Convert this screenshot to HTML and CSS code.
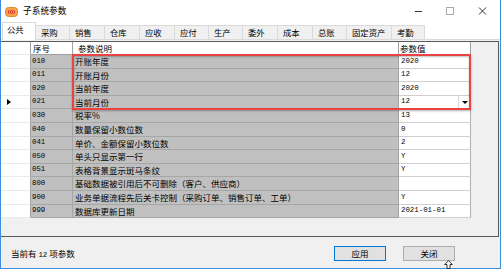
FILE: index.html
```html
<!DOCTYPE html>
<html>
<head>
<meta charset="utf-8">
<link rel="stylesheet" href="styles.css">
</head>
<body>
<div class="win">
  <div class="titlebar">
    <svg class="appicon" width="13" height="10" viewBox="0 0 13 10">
      <rect x="0.5" y="0.5" width="12" height="9" rx="3" fill="#f4a24c" stroke="#e08a30" stroke-width="1"/>
      <rect x="3" y="3.5" width="7" height="3" rx="1" fill="#d8322c"/>
      <rect x="4" y="4.5" width="1" height="1" fill="#ffd"/>
      <rect x="6" y="4.5" width="1" height="1" fill="#ffd"/>
      <rect x="8" y="4.5" width="1" height="1" fill="#ffd"/>
    </svg>
    <span class="title">子系统参数</span>
    <div class="controls">
      <svg class="ctl" width="32" height="20" viewBox="0 0 32 20"><line x1="12" y1="10.5" x2="19" y2="10.5" stroke="#333" stroke-width="1"/></svg>
      <svg class="ctl" width="32" height="20" viewBox="0 0 32 20"><rect x="11.5" y="6.5" width="7" height="7" fill="none" stroke="#aaa" stroke-width="1"/></svg>
      <svg class="ctl" width="32" height="20" viewBox="0 0 32 20"><path d="M12 6.5 L19 13.5 M19 6.5 L12 13.5" stroke="#333" stroke-width="1"/></svg>
    </div>
  </div>
  <div class="tabs">
    <div class="tab sel w34">公共</div>
    <div class="tab w34">采购</div>
    <div class="tab w35">销售</div>
    <div class="tab w35">仓库</div>
    <div class="tab w35">应收</div>
    <div class="tab w34">应付</div>
    <div class="tab w34">生产</div>
    <div class="tab w35">委外</div>
    <div class="tab w35">成本</div>
    <div class="tab w34">总账</div>
    <div class="tab w45">固定资产</div>
    <div class="tab w33">考勤</div>
  </div>
  <div class="gridbox">
    <div class="grid">
      <div class="c rh hd"></div><div class="c hd">序号</div><div class="c hd pl5">参数说明</div><div class="c hd vl">参数值</div>

      <div class="c rh"></div><div class="c g num">010</div><div class="c g">开账年度</div><div class="c v num">2020</div>
      <div class="c rh"></div><div class="c g num">011</div><div class="c g">开账月份</div><div class="c v num">12</div>
      <div class="c rh"></div><div class="c g num">020</div><div class="c g">当前年度</div><div class="c v num">2020</div>
      <div class="c rh"><span class="cur"></span></div><div class="c g num">021</div><div class="c g">当前月份</div><div class="c v num dd"><span class="ddt">12</span><span class="ddb"><span class="arrow"></span></span></div>
      <div class="c rh"></div><div class="c g num">030</div><div class="c g">税率%</div><div class="c v num">13</div>
      <div class="c rh"></div><div class="c g num">040</div><div class="c g">数量保留小数位数</div><div class="c v num">0</div>
      <div class="c rh"></div><div class="c g num">041</div><div class="c g">单价、金额保留小数位数</div><div class="c v num">2</div>
      <div class="c rh"></div><div class="c g num">050</div><div class="c g">单头只显示第一行</div><div class="c v num">Y</div>
      <div class="c rh"></div><div class="c g num">051</div><div class="c g">表格背景显示斑马条纹</div><div class="c v num">Y</div>
      <div class="c rh"></div><div class="c g num">800</div><div class="c g">基础数据被引用后不可删除（客户、供应商）</div><div class="c v num"></div>
      <div class="c rh"></div><div class="c g num">900</div><div class="c g">业务单据流程先后关卡控制（采购订单、销售订单、工单）</div><div class="c v num">Y</div>
      <div class="c rh"></div><div class="c g num">999</div><div class="c g">数据库更新日期</div><div class="c v num">2021-01-01</div>
    </div>
    <div class="hl"></div>
  </div>
  <div class="footer">
    <span class="status">当前有 <span class="num">12</span> 项参数</span>
    <div class="btns">
      <div class="btn focus">应用</div>
      <div class="btn">关闭</div>
    </div>
  </div>
  <svg class="cursor" width="9" height="9" viewBox="0 0 9 9"><path d="M4.5 0.7 L8.3 4.5 L6 4.5 L6 8.5 L3 8.5 L3 4.5 L0.7 4.5 Z" fill="#fff" stroke="#000" stroke-width="0.8"/></svg>
</div>
</body>
</html>
```

FILE: styles.css
```css
* { box-sizing: border-box; margin: 0; padding: 0; }
html, body { width: 501px; height: 269px; overflow: hidden; }
body {
  font-family: "Noto Sans CJK SC", "Noto Sans", sans-serif;
  font-size: 8.5px;
  color: #000;
  background: #f0f0f0;
}
.win {
  width: 501px;
  height: 269px;
  border-left: 1px solid #3d8fdc;
  border-right: 1px solid #3d8fdc;
  border-bottom: 1px solid #3d8fdc;
  background: #f0f0f0;
  display: flex;
  flex-direction: column;
  position: relative;
}
.titlebar {
  height: 21px;
  background: #fff;
  display: flex;
  align-items: center;
  padding-left: 4px;
  flex: none;
}
.appicon { display: block; margin-top: 2px; }
.title { margin-left: 5px; font-size: 8.7px; line-height: 1; margin-top: 2px; }
.controls { margin-left: auto; display: flex; margin-right: 1px; }
.ctl { display: block; }
.tabs {
  height: 19px;
  background: #fff;
  display: flex;
  align-items: flex-end;
  padding-left: 1px;
  border-bottom: 1px solid #dadada;
  flex: none;
}
.tab {
  height: 14px;
  background: #f0f0f0;
  border: 1px solid #d9d9d9;
  border-bottom: none;
  border-left: none;
  padding-left: 5px;
  line-height: 12px;
  font-size: 8.4px;
  white-space: nowrap;
}
.tab.sel {
  height: 18px;
  background: #fff;
  border-left: 1px solid #d9d9d9;
  margin-bottom: -1px;
  line-height: 13px;
  padding-left: 4px;
}
.w33 { width: 33px; }
.w34 { width: 34px; }
.w35 { width: 35px; }
.w45 { width: 45px; }
.gridbox {
  margin-top: 1px;
  height: 196px;
  margin-right: 1px;
  border-top: 1px solid #5a5a5a;
  border-bottom: 1px solid #5a5a5a;
  border-right: 1px solid #5a5a5a;
  background: #f0f0f0;
  position: relative;
  flex: none;
}
.grid {
  display: grid;
  grid-template-columns: 30px 42px 326px 72px;
  grid-template-rows: 13px repeat(12, 13.6px);
}
.c {
  border-right: 1px solid #a0a0a0;
  border-bottom: 1px solid #a0a0a0;
  display: flex;
  align-items: center;
  padding-left: 2px;
  white-space: nowrap;
  overflow: hidden;
  line-height: 1;
}
.hd { background: #fff; padding-left: 2px; }
.pl5 { padding-left: 5px; }
.vl { padding-left: 1px; }
.rh { background: #fff; border-bottom-color: #eaeaea; border-right-color: #a0a0a0; position: relative; }
.g { background: #c0c0c0; border-bottom-color: #a6a6a6; border-right-color: #a6a6a6; }
.g.num { padding-left: 1px; }
.v { background: #fff; border-bottom-color: #cfcfcf; border-right-color: #b0b0b0; padding-left: 2px; }
.num { font-family: "Liberation Mono", "DejaVu Sans Mono", monospace; font-size: 7.4px; }
.dd { padding-right: 0; }
.ddt { flex: 1; }
.ddb {
  width: 12px;
  align-self: stretch;
  border-left: 1px solid #d8d8d8;
  display: flex;
  align-items: center;
  justify-content: center;
}
.arrow {
  width: 0; height: 0;
  border-left: 3px solid transparent;
  border-right: 3px solid transparent;
  border-top: 3px solid #000;
}
.cur {
  width: 0; height: 0;
  border-top: 3px solid transparent;
  border-bottom: 3px solid transparent;
  border-left: 4px solid #000;
  margin-left: 4px;
}
.hl {
  position: absolute;
  left: 71px;
  top: 12px;
  width: 399px;
  height: 56px;
  border: 2px solid #e84444;
  box-shadow: 0 1px 2px rgba(0,0,0,0.3), inset 0 1px 2px rgba(0,0,0,0.25);
  pointer-events: none;
}
.footer {
  flex: 1;
  display: flex;
  align-items: center;
  padding-left: 10px;
  padding-right: 45px;
}
.status { font-size: 8.5px; margin-top: 1px; }
.status .num { font-size: 7.4px; }
.btns { margin-left: auto; display: flex; gap: 17px; margin-top: 1px; }
.btn {
  width: 52px;
  height: 15px;
  background: #e1e1e1;
  border: 1px solid #adadad;
  display: flex;
  align-items: center;
  justify-content: center;
  font-size: 8.5px;
  line-height: 1;
}
.btn.focus { border-color: #0078d7; }
.cursor { position: absolute; left: 443px; top: 260px; }
```
